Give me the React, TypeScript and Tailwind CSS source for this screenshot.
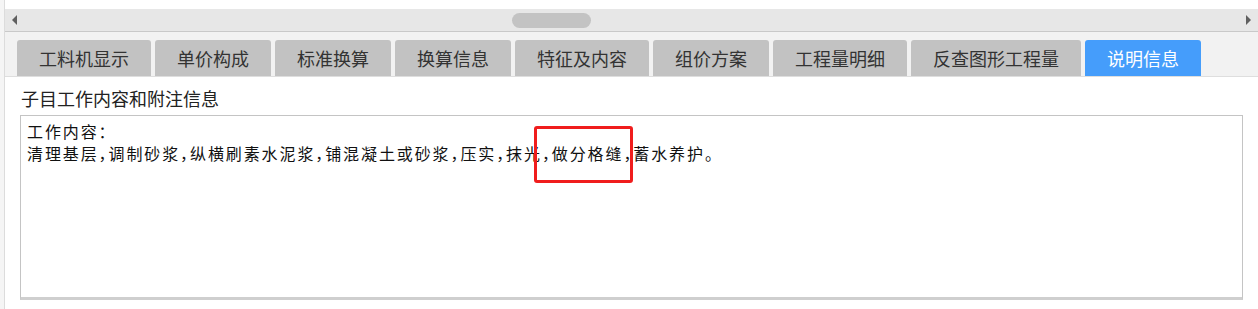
import React from "react";

const tabs = [
  { label: "工料机显示", w: "w-[134px]" },
  { label: "单价构成", w: "w-[116px]" },
  { label: "标准换算", w: "w-[116px]" },
  { label: "换算信息", w: "w-[116px]" },
  { label: "特征及内容", w: "w-[134px]" },
  { label: "组价方案", w: "w-[116px]" },
  { label: "工程量明细", w: "w-[134px]" },
  { label: "反查图形工程量", w: "w-[170px]" },
  { label: "说明信息", w: "w-[116px]", active: true },
];

const App = () => {
  return (
    <div className="w-[1258px] h-[309px] bg-white flex flex-row overflow-hidden font-['Noto_Sans_CJK_SC','Noto_Sans',sans-serif]">
      <div className="w-[5px] h-full bg-[#f5f5f5] border-r border-[#dcdcdc]"></div>
      <div className="flex-1 flex flex-col">
        <div className="h-[9px] bg-white"></div>
        {/* horizontal scrollbar */}
        <div className="h-[23px] bg-[#e7e7e7] border-b border-[#c9c9c9] flex flex-row items-center justify-between px-[7px]">
          <div className="w-0 h-0 border-y-[5px] border-y-transparent border-r-[5px] border-r-[#606060]"></div>
          <div className="flex-1 h-full flex items-center">
            <div className="ml-[495px] w-[79px] h-[15px] rounded-full bg-[#c3c3c3]"></div>
          </div>
          <div className="w-0 h-0 border-y-[5px] border-y-transparent border-l-[5px] border-l-[#606060]"></div>
        </div>
        {/* tabs */}
        <div className="h-[45px] bg-[#f2f2f2] border-b border-[#dedede] flex flex-row items-end gap-[4px] pl-[12px]">
          {tabs.map((t) => (
            <div
              key={t.label}
              className={
                t.w +
                " h-[36px] rounded-t-[3px] flex items-center justify-center text-[18px] " +
                (t.active ? "bg-[#459dfb] text-white" : "bg-[#c2c2c2] text-[#333333]")
              }
            >
              {t.label}
            </div>
          ))}
        </div>
        {/* content */}
        <div className="flex-1 bg-white flex flex-col pl-[15px] pr-[15px]">
          <div className="h-[38px] flex items-center pl-[1px] pt-[4px] text-[18px] text-[#222222]">
            子目工作内容和附注信息
          </div>
          <div className="relative h-[185px] border border-[#c4c4c4] border-b-[3px] border-b-[#cfcfcf] bg-white px-[6px] pt-[4px] text-[16px] leading-[22px] tracking-[1.9px] text-[#111111] [font-feature-settings:'halt']">
            <div>工作内容：</div>
            <div>
              清理基层，调制砂浆，纵横刷素水泥浆，铺混凝土或砂浆，压实，抹光，做分格缝，蓄水养护<span className="tracking-normal">。</span>
            </div>
            <div className="absolute left-[513px] top-[10px] w-[99px] h-[57px] border-[3px] border-[#f01d1d] rounded-[3px]"></div>
          </div>
        </div>
      </div>
    </div>
  );
};

export default App;
